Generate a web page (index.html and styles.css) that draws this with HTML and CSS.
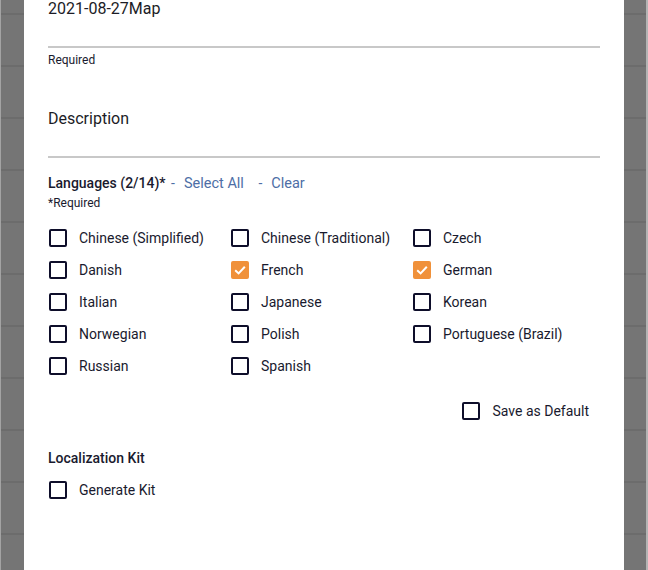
FILE: index.html
```html
<!DOCTYPE html>
<html lang="en">
<head>
  <meta charset="UTF-8">
  <title>Edit Map</title>
  <link rel="stylesheet" href="styles.css">
</head>
<body>
  <div class="backdrop">
    <div class="modal">
      <div class="field first">2021-08-27Map</div>
      <p class="hint">Required</p>

      <div class="field desc">Description</div>

      <div class="lang-head">
        <strong>Languages (2/14)*</strong>
        <span class="dash">-</span><a class="link" href="#">Select All</a>
        <span class="dash second">-</span><a class="link" href="#">Clear</a>
      </div>
      <p class="hint req">*Required</p>

      <div class="lang-grid">
        <label class="check"><span class="box"></span>Chinese (Simplified)</label>
        <label class="check"><span class="box"></span>Chinese (Traditional)</label>
        <label class="check"><span class="box"></span>Czech</label>
        <label class="check"><span class="box"></span>Danish</label>
        <label class="check"><span class="box on"><svg viewBox="0 0 18 18"><path d="M4.2 9.2 L7.6 12.4 L13.8 5.8"/></svg></span>French</label>
        <label class="check"><span class="box on"><svg viewBox="0 0 18 18"><path d="M4.2 9.2 L7.6 12.4 L13.8 5.8"/></svg></span>German</label>
        <label class="check"><span class="box"></span>Italian</label>
        <label class="check"><span class="box"></span>Japanese</label>
        <label class="check"><span class="box"></span>Korean</label>
        <label class="check"><span class="box"></span>Norwegian</label>
        <label class="check"><span class="box"></span>Polish</label>
        <label class="check"><span class="box"></span>Portuguese (Brazil)</label>
        <label class="check"><span class="box"></span>Russian</label>
        <label class="check"><span class="box"></span>Spanish</label>
      </div>

      <div class="default-row">
        <label class="check"><span class="box"></span>Save as Default</label>
      </div>

      <h3 class="section">Localization Kit</h3>
      <label class="check kit"><span class="box"></span>Generate Kit</label>
    </div>
  </div>
</body>
</html>
```

FILE: styles.css
```css
body {
  margin: 0;
  font-family: Roboto, "Liberation Sans", sans-serif;
  color: #191a2e;
  overflow: hidden;
}

.backdrop {
  min-height: 570px;
  padding: 0 22px 0 23px;
  border-left: 1px solid #a3a3a3;
  border-right: 2px solid #b4b4b4;
  background-color: #757575;
  background-image: repeating-linear-gradient(to bottom, transparent 0, transparent 16px, #6c6c6c 16px, #6c6c6c 18px, transparent 18px, transparent 52px);
}

.modal {
  background: #fff;
  min-height: 600px;
  padding: 0 24px;
}

.field {
  font-size: 16px;
  line-height: 24px;
  color: #1c1c26;
  padding-bottom: 25px;
  border-bottom: 2px solid #c8c8c8;
}

.field.first {
  margin-top: -3px;
}

.field.desc {
  margin-top: 39px;
}

.hint {
  margin: 4px 0 0;
  font-size: 12px;
  line-height: 16px;
}

.hint.req {
  margin-top: 2px;
}

.lang-head {
  margin-top: 15px;
  height: 20px;
  font-size: 14px;
  line-height: 20px;
}

.lang-head strong {
  font-weight: 500;
}

.dash {
  color: #4d6ea6;
  margin: 0 9px 0 2px;
}

.dash.second {
  margin-left: 11px;
}

.link {
  color: #4d6ea6;
  font-size: 14.5px;
  line-height: 16px;
  text-decoration: none;
}

.lang-grid {
  margin-top: 11px;
  display: grid;
  grid-template-columns: repeat(3, 182px);
}

.check {
  display: flex;
  align-items: center;
  height: 32px;
  font-size: 14px;
}

.box {
  box-sizing: border-box;
  width: 18px;
  height: 18px;
  margin-left: 1px;
  margin-right: 12px;
  border: 2px solid #0e0e2a;
  border-radius: 2px;
  flex: none;
}

.box.on {
  background: #f0913a;
  border-color: #f0913a;
  position: relative;
}

.box.on svg {
  position: absolute;
  left: -2px;
  top: -2px;
  width: 18px;
  height: 18px;
}

.box.on path {
  fill: none;
  stroke: #fff;
  stroke-width: 2;
}

.default-row {
  margin-top: 13px;
  display: flex;
  justify-content: flex-end;
  padding-right: 11px;
}

.section {
  margin: 21px 0 0;
  font-size: 14px;
  line-height: 20px;
  font-weight: 500;
}

.kit {
  margin-top: 6px;
}
```
